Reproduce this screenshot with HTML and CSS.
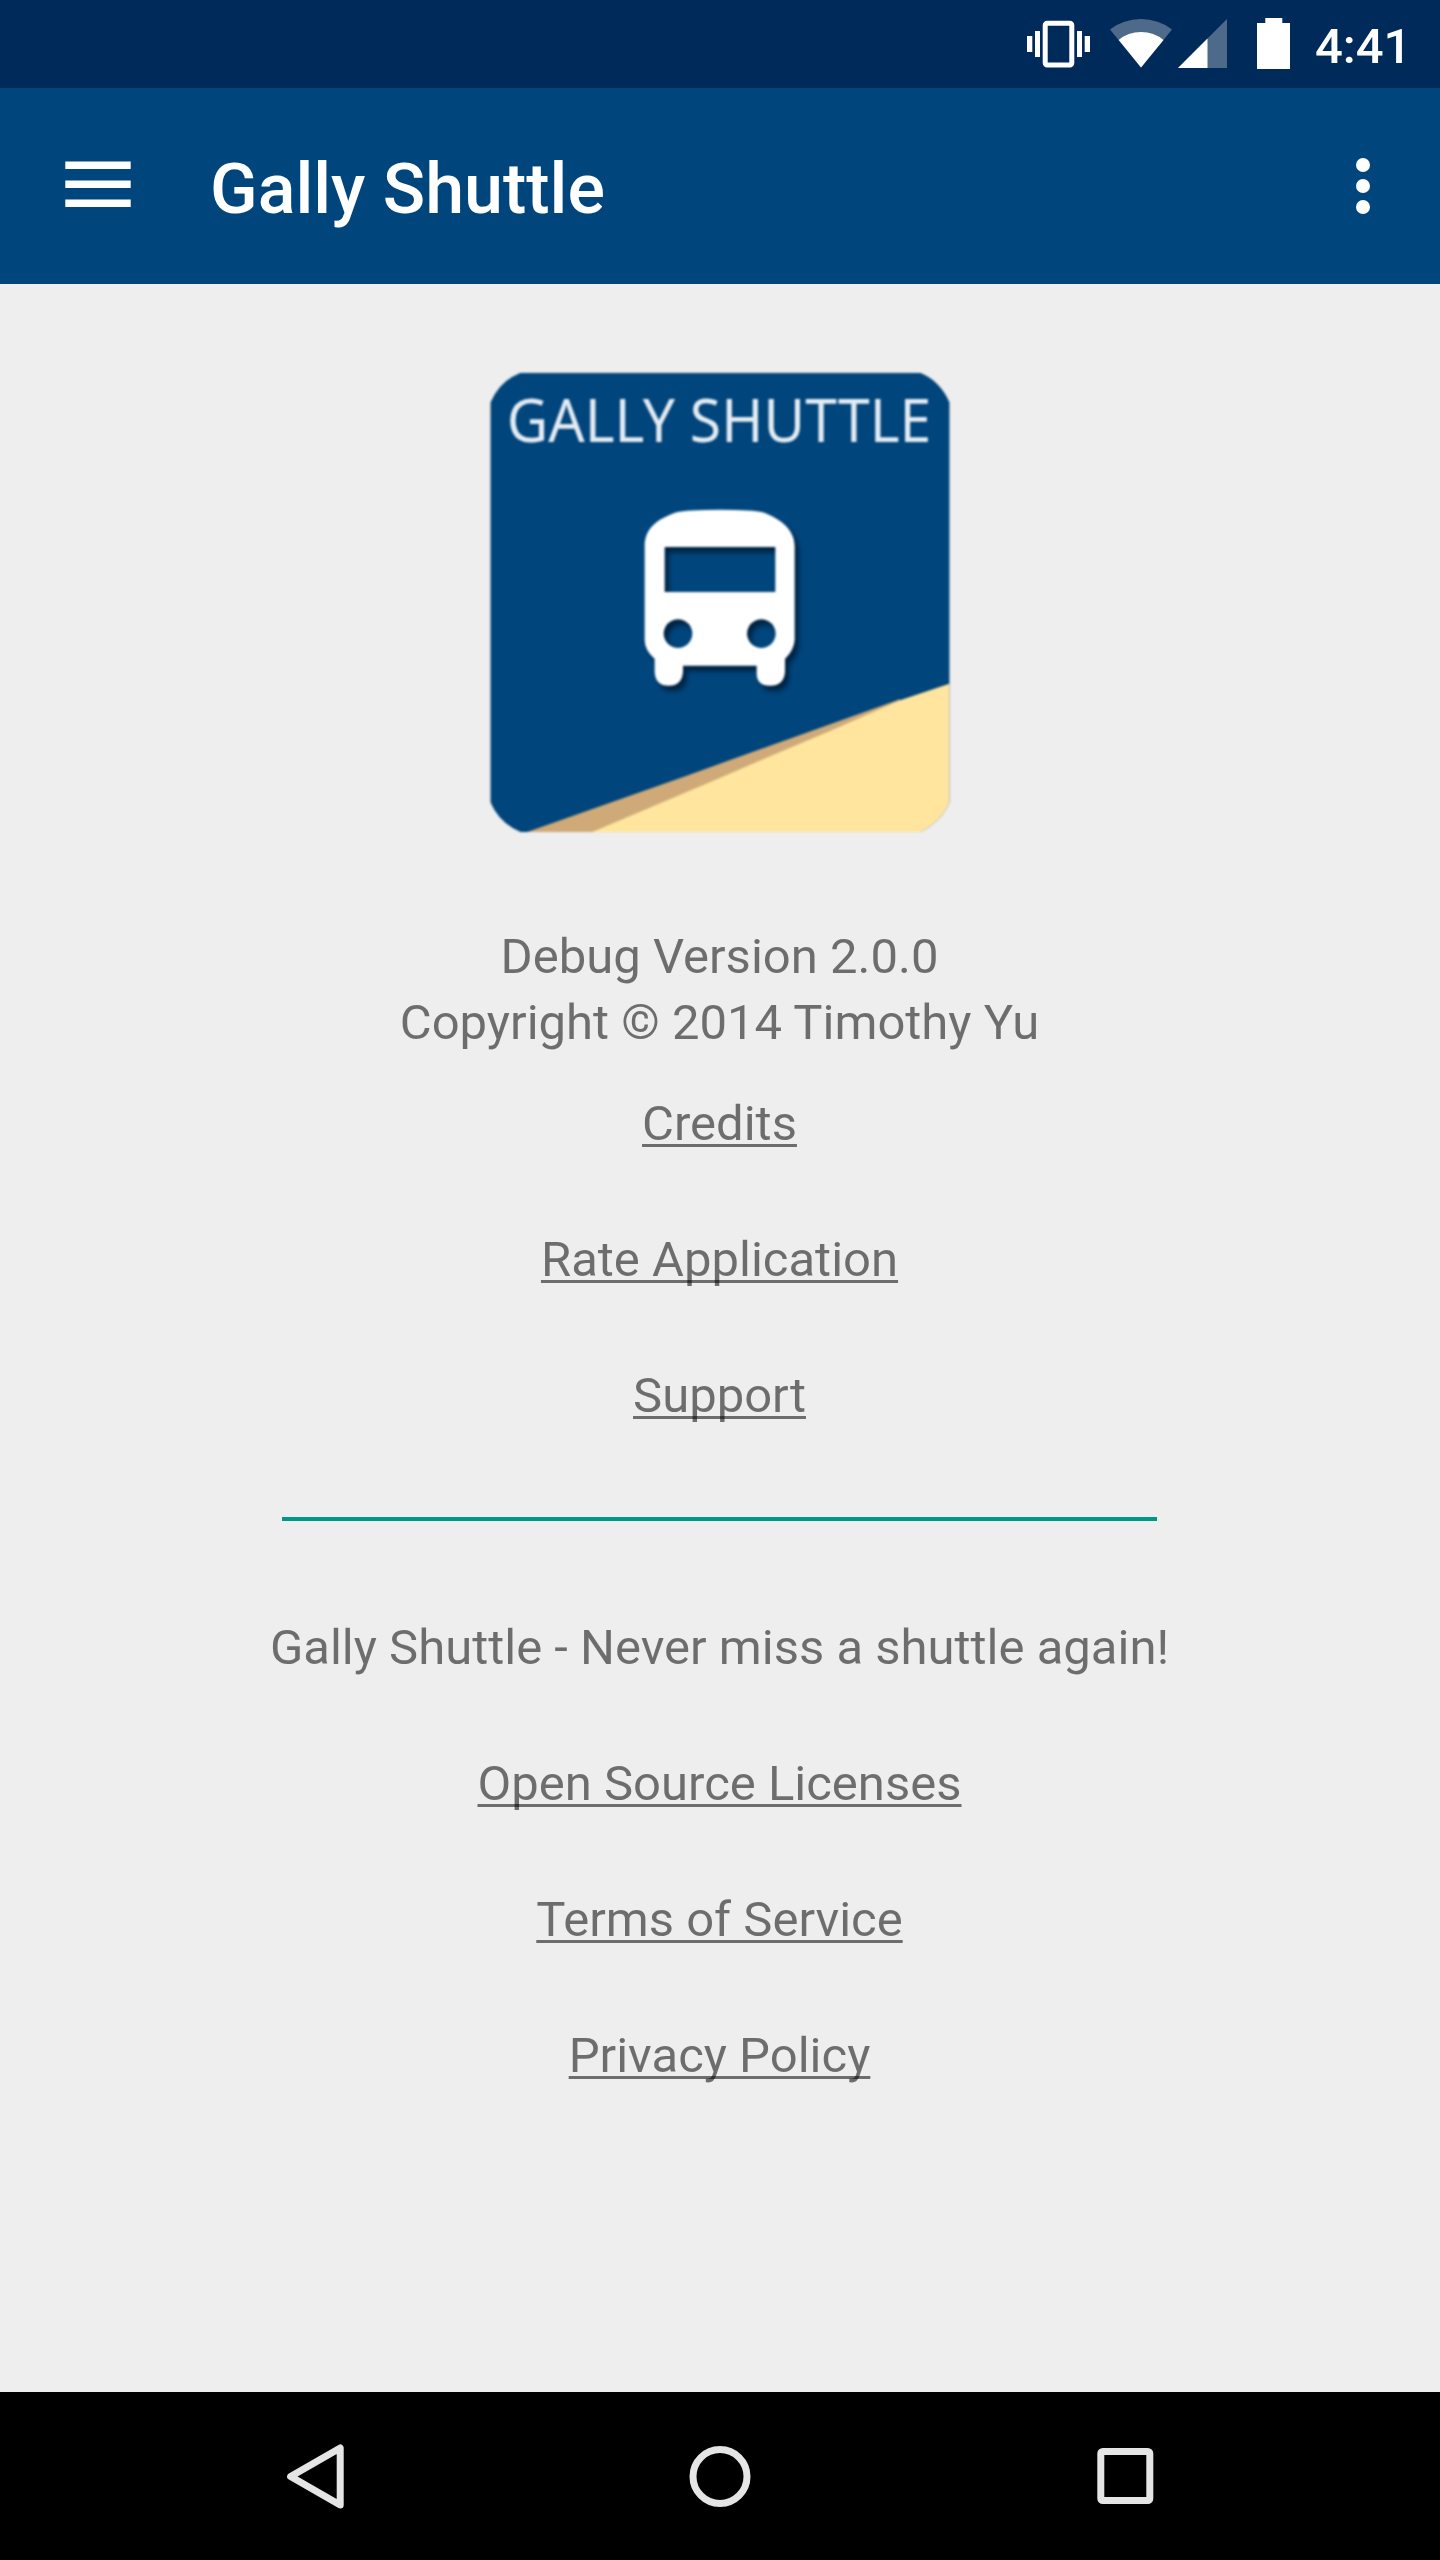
FILE: index.html
```html
<!DOCTYPE html>
<html lang="en">
<head>
<meta charset="utf-8">
<title>Gally Shuttle</title>
<link rel="stylesheet" href="styles.css">
</head>
<body>
<div class="screen">
  <header class="status-bar">
    <svg class="vibrate" width="64" height="52" viewBox="0 0 64 52" fill="#fff">
      <path d="M0 19h5.3v16H0zM8 14h5v26H8zM50 14h5v26h-5zM57.7 19H63v16h-5.3z"/>
      <rect x="18.2" y="6.2" width="26.6" height="41.8" rx="2" fill="none" stroke="#fff" stroke-width="5"/>
    </svg>
    <svg class="wifi" width="62" height="52" viewBox="0 0 62 52" fill="#fff">
      <path fill-opacity=".3" d="M31 50.500L0 12.500Q13.500 2 31 2T62 12.500z"/>
      <path d="M31 50.500L8.700 23Q18 15 31 15T53.500 23z"/>
    </svg>
    <svg class="signal" width="50" height="52" viewBox="0 0 50 52" fill="#fff">
      <path fill-opacity=".3" d="M0 51L49 2v49z"/>
      <path d="M0 51l29.500-29.500V51z"/>
    </svg>
    <svg class="battery" width="33" height="52" viewBox="0 0 33 52" fill="#fff">
      <path d="M8.300 1h17v5H33v46H0V6h8.300z"/>
    </svg>
    <span class="clock">4:41</span>
  </header>
  <div class="app-bar">
    <svg class="menu" width="66" height="46" viewBox="0 0 66 46" fill="#fff">
      <path d="M.3 .5h65.400v7.500H.3zM.3 19.500h65.400v7.500H.3zM.3 38.500h65.400v7.500H.3z"/>
    </svg>
    <h1 class="title">Gally Shuttle</h1>
    <svg class="more" width="14" height="56" viewBox="0 0 14 56" fill="#fff">
      <circle cx="7" cy="7" r="7"/><circle cx="7" cy="28" r="7"/><circle cx="7" cy="49" r="7"/>
    </svg>
  </div>
  <main class="content">
    <svg class="logo" width="480" height="480" viewBox="0 0 1440 1440">
      <defs>
        <clipPath id="tile"><path d="M122 38H1320Q1380 62 1409 128V1326Q1382 1388 1320 1416H122Q58 1390 31 1326V128Q60 62 122 38z"/></clipPath>
      </defs>
      <g clip-path="url(#tile)">
        <path fill="#00457c" d="M0 0h1440v1440H0z"/>
        <path fill="#cfaa78" d="M130 1420L620 1247L870 1157L1260 1018V1100L330 1420z"/>
        <path fill="#ffe59e" d="M332 1418L700 1262L900 1176L1050 1113L1260 1021L1440 960V1440H332z"/>
      </g>
      <text class="logo-text" x="80" y="247" textLength="1274" lengthAdjust="spacingAndGlyphs">GALLY SHUTTLE</text>
      <path class="bus" fill-rule="evenodd" d="M494 560C494 505 530 478 590 457Q620 449 720 449T848 457C905 478 944 510 944 560V840Q942 870 915 897V935Q912 977 870 977T830 935V917H609V935Q606 977 566 977T524 935V897Q494 870 494 840zM554 561V696H886V561zM594 778a43 43 0 1 0 .1 0zM844 778a43 43 0 1 0 .1 0z"/>
    </svg>
    <p class="about">Debug Version 2.0.0<br>Copyright © 2014 Timothy Yu</p>
    <a class="link first">Credits</a>
    <a class="link">Rate Application</a>
    <a class="link">Support</a>
    <hr class="divider">
    <p class="tagline">Gally Shuttle - Never miss a shuttle again!</p>
    <a class="link">Open Source Licenses</a>
    <a class="link">Terms of Service</a>
    <a class="link">Privacy Policy</a>
  </main>
  <nav class="nav-bar">
    <svg width="84" height="84" viewBox="0 0 84 84"><path d="M67.200 14v57L17.600 42.500z"/></svg>
    <svg width="84" height="84" viewBox="0 0 84 84"><circle cx="42" cy="42.500" r="27"/></svg>
    <svg width="84" height="84" viewBox="0 0 84 84"><rect x="17.800" y="17.500" width="49" height="49" rx="2"/></svg>
  </nav>
</div>
</body>
</html>
```
FILE: styles.css
```css
body {
  margin: 0;
  font-family: Roboto, sans-serif;
}

.screen {
  width: 1440px;
  height: 2560px;
  display: flex;
  flex-direction: column;
  background: #eee;
  overflow: hidden;
}

svg {
  display: block;
  flex: none;
}

.status-bar {
  box-sizing: border-box;
  height: 88px;
  padding: 17px 34px 0 0;
  display: flex;
  align-items: flex-start;
  justify-content: flex-end;
  background: #002a5a;
}

.vibrate { margin-right: 19px; }
.wifi { margin-right: 6px; }
.signal { margin-right: 29px; }
.battery { margin-right: 25px; }

.clock {
  width: 91px;
  color: #fff;
  font-size: 49px;
  font-weight: 500;
  line-height: 60px;
  white-space: nowrap;
}

.app-bar {
  box-sizing: border-box;
  height: 196px;
  padding: 0 70px 0 65px;
  display: flex;
  align-items: center;
  background: #00457c;
}

.menu { margin: 0 79px 4px 0; }

.title {
  flex: 1;
  margin: 6px 0 0;
  color: #fff;
  font-size: 70px;
  font-weight: 500;
  line-height: 82px;
}

.content {
  flex: 1;
  padding: 76px 1px 0 0;
  display: flex;
  flex-direction: column;
  align-items: center;
  color: rgba(0, 0, 0, 0.54);
  font-size: 49px;
  line-height: 66px;
  text-align: center;
}

.logo {
  margin-left: 1px;
  filter: blur(0.8px);
}

.logo-text {
  font-family: "Noto Sans", "Open Sans", sans-serif;
  font-size: 182px;
  font-weight: 400;
  fill: #e4ebf2;
}

.bus {
  fill: #fff;
  filter: drop-shadow(12px 16px 7px rgba(0, 20, 40, 0.7));
}

.about { margin: 84px 0 0; }

.link {
  margin-top: 70px;
  text-decoration: underline;
  text-decoration-thickness: 3px;
  text-decoration-skip-ink: none;
  text-underline-offset: 4px;
}

.link.first { margin-top: 35px; }

.divider {
  width: 875px;
  height: 4px;
  margin: 88px 0 0;
  border: 0;
  background: #009688;
}

.tagline { margin: 94px 0 0; }

.nav-bar {
  height: 168px;
  display: flex;
  align-items: center;
  justify-content: center;
  gap: 321px;
  background: #000;
  fill: none;
  stroke: #e5e5e5;
  stroke-width: 7px;
  stroke-linejoin: round;
}
```
